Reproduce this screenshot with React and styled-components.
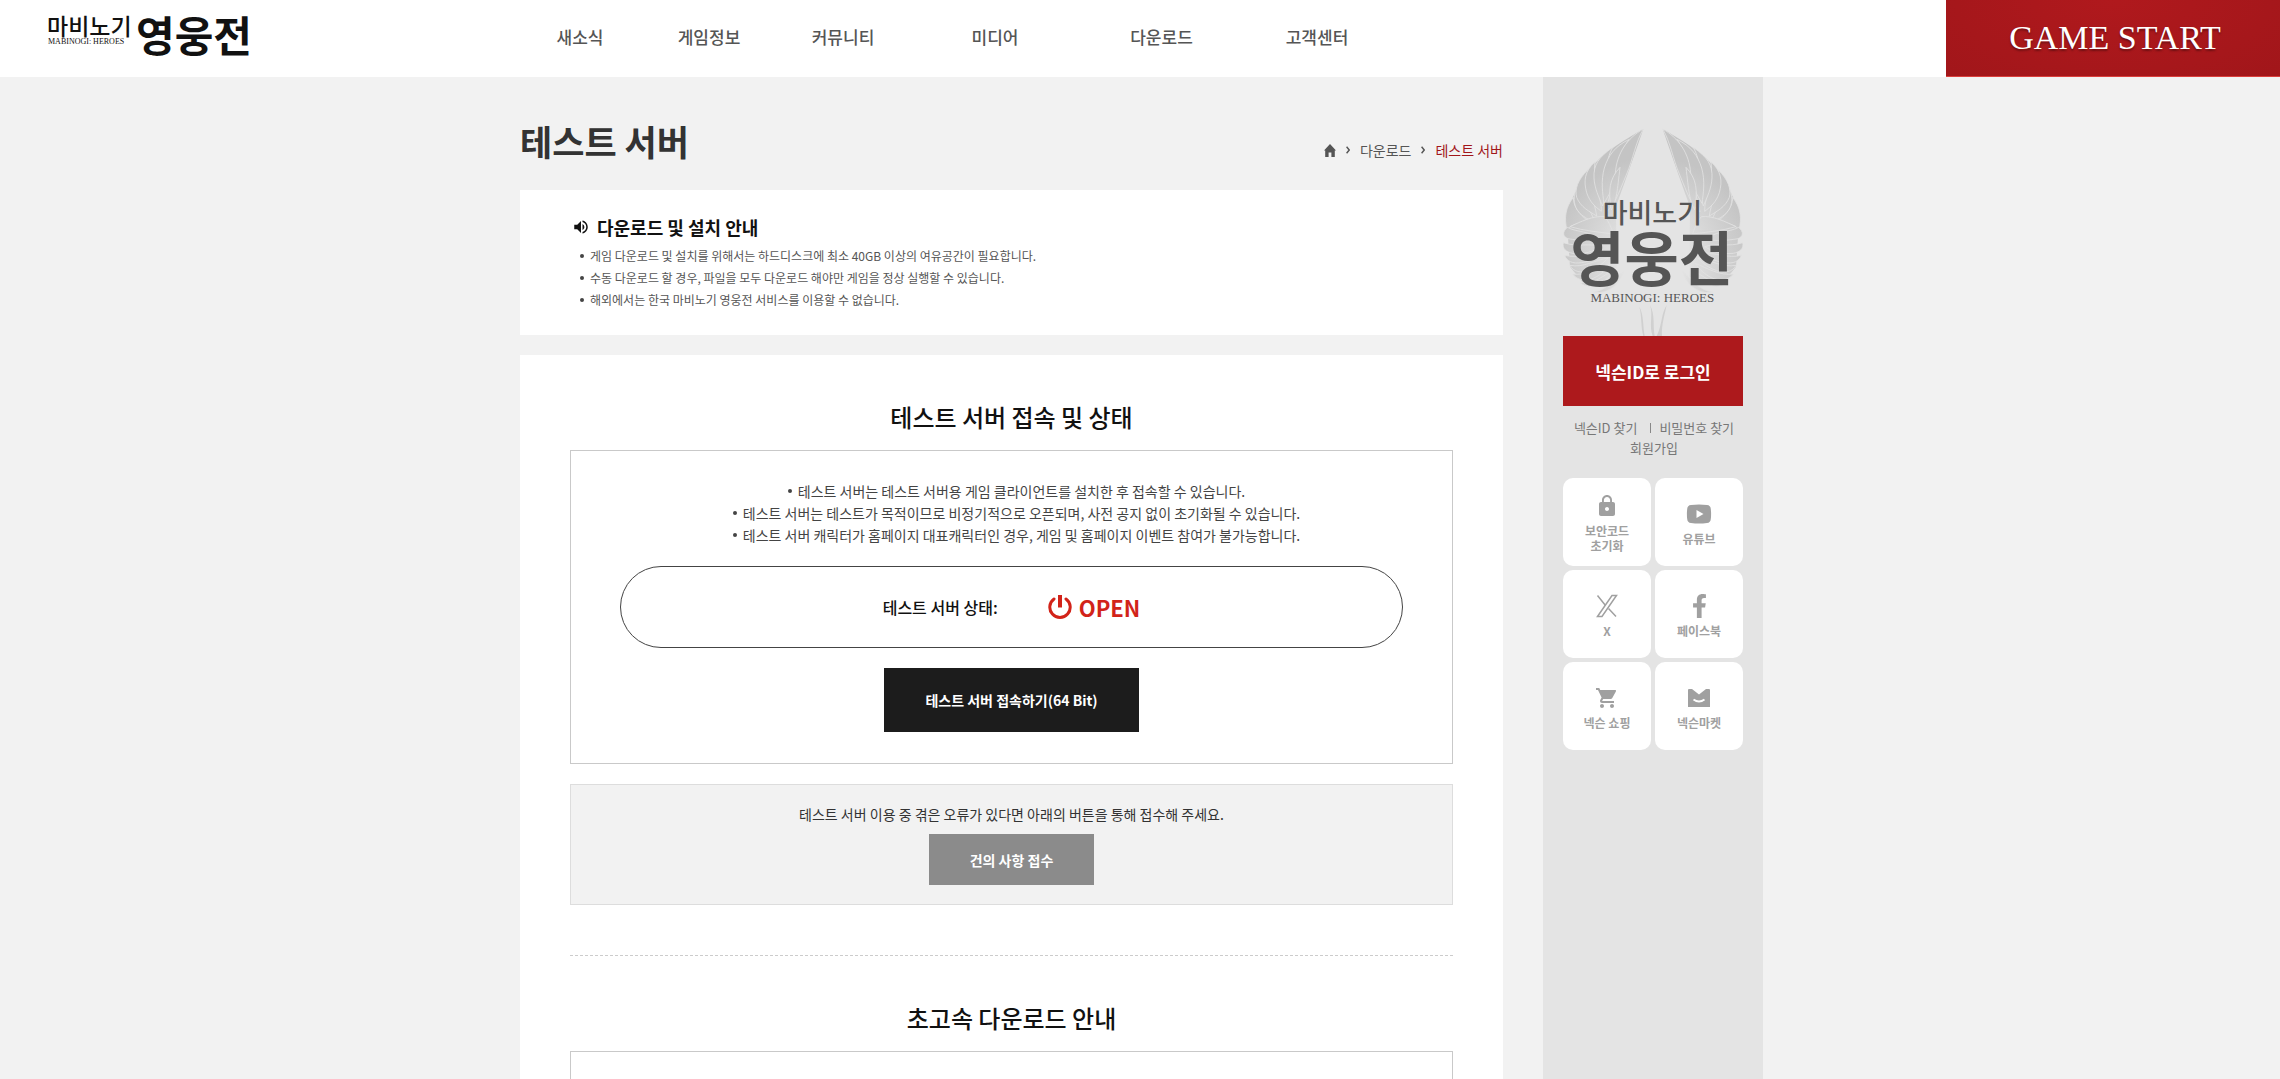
import React from "react";
import styled, { createGlobalStyle } from "styled-components";
import { MdLock, MdShoppingCart, MdVolumeUp } from "react-icons/md";
import { FaFacebookF } from "react-icons/fa";

const GlobalStyle = createGlobalStyle`
  * {
    box-sizing: border-box;
  }

  body {
    margin: 0;
    background: #f2f2f2;
    color: #333;
    font-family: "Noto Sans CJK KR", sans-serif;
    font-size: 14px;
    line-height: 22px;
  }

  h1, h2, h3, p, ul {
    margin: 0;
    padding: 0;
  }

  ul {
    list-style: none;
  }

  a {
    color: inherit;
    text-decoration: none;
  }

  button {
    border: 0;
    padding: 0;
    font-family: inherit;
    cursor: pointer;
  }

  svg {
    display: block;
  }
`;

/* header */
const Header = styled.header`
  display: grid;
  grid-template-columns: 1fr minmax(0, 1242px) 1fr;
  height: 77px;
  background: #fff;
`;

const LogoLink = styled.a`
  padding-left: 44px;
`;

const Nav = styled.nav`
  display: grid;
  grid-template-columns: 122px 136px 132px 172px 161px 150px;
  align-items: center;
  padding-bottom: 3px;
`;

const NavLink = styled.a`
  color: #555;
  font-size: 17px;
  font-weight: 500;
  line-height: 24px;
  text-align: center;
`;

const StartButton = styled.button`
  justify-self: end;
  width: 334px;
  padding-left: 4px;
  border-bottom: 1px solid #dc3f3c;
  background: radial-gradient(ellipse at 50% 0, #b0191d, #a1161a);
  color: #fff;
  font-family: "Liberation Serif", serif;
  font-size: 34px;
  text-shadow: 0 2px 2px rgba(0, 0, 0, 0.35);
`;

/* layout */
const Page = styled.div`
  display: flex;
  flex-direction: column;
  min-height: 100vh;
`;

const Body = styled.div`
  display: grid;
  grid-template-columns: minmax(0, 1fr) 220px;
  gap: 40px;
  flex: 1;
  width: 100%;
  max-width: 1246px;
  margin: 0 auto;
  padding-left: 3px;
`;

const Main = styled.main`
  display: flex;
  flex-direction: column;
  gap: 20px;
`;

const TitleRow = styled.div`
  display: flex;
  align-items: flex-end;
  justify-content: space-between;
  padding: 37px 0 3px;
`;

const PageTitle = styled.h1`
  color: #333;
  font-size: 35px;
  font-weight: 700;
  line-height: 53px;
`;

const Breadcrumb = styled.nav`
  display: flex;
  align-items: center;
  gap: 10px;
  padding-bottom: 6px;
  color: #555;
`;

const Current = styled.span`
  color: #a1161a;
`;

const Notice = styled.section`
  padding: 24px 50px;
  background: #fff;
`;

const NoticeTitle = styled.h2`
  display: flex;
  align-items: center;
  gap: 7px;
  margin-bottom: 5px;
  padding-left: 2px;
  color: #111;
  font-size: 18px;
  font-weight: 700;
  line-height: 26px;
`;

const NoticeList = styled.ul`
  padding-left: 10px;
  color: #555;
  font-size: 12px;
`;

const Item = styled.li`
  display: flex;
  align-items: center;
  justify-content: ${(props) => (props.$center ? "center" : "flex-start")};
  gap: 6px;

  &::before {
    content: "";
    width: 4px;
    height: 4px;
    border-radius: 50%;
    background: #444;
  }
`;

const Content = styled.section`
  padding: 0 50px 50px;
  background: #fff;
`;

const SectionTitle = styled.h2`
  padding: 44px 0 15px;
  color: #111;
  font-size: 24px;
  font-weight: 500;
  line-height: 36px;
  text-align: center;
`;

const Box = styled.div`
  display: flex;
  flex-direction: column;
  align-items: center;
  padding: 29px 49px 31px;
  border: 1px solid #c9c9c9;
`;

const CenterList = styled.ul`
  padding-left: 10px;
  color: #444;
  font-size: 14px;
`;

const Status = styled.div`
  display: flex;
  align-items: center;
  justify-content: center;
  gap: 50px;
  width: 100%;
  height: 82px;
  margin: 20px 0;
  border: 1px solid #444;
  border-radius: 41px;
  color: #111;
  font-size: 16px;
  font-weight: 500;
`;

const Open = styled.strong`
  display: flex;
  align-items: center;
  gap: 7px;
  color: #d22319;
  font-size: 22px;
  font-weight: 700;
`;

const ConnectButton = styled.button`
  width: 255px;
  height: 64px;
  background: #1c1c1c;
  color: #fff;
  font-size: 14px;
  font-weight: 700;
`;

const Report = styled.div`
  display: flex;
  flex-direction: column;
  align-items: center;
  gap: 9px;
  margin-top: 20px;
  padding: 18px 20px 19px;
  border: 1px solid #ddd;
  background: #f2f2f2;
`;

const ReportButton = styled.button`
  width: 165px;
  height: 51px;
  background: #8b8b8b;
  color: #fff;
  font-size: 14px;
  font-weight: 700;
`;

const Divider = styled.hr`
  margin: 50px 0 0;
  border: 0;
  border-top: 1px dashed #ccc;
`;

/* side */
const Side = styled.aside`
  padding: 51px 20px 40px;
  background: #e4e4e4;
`;

const LoginButton = styled.button`
  width: 100%;
  height: 70px;
  background: #ad191c;
  color: #fff;
  font-size: 17px;
  font-weight: 700;
`;

const Account = styled.div`
  display: flex;
  flex-wrap: wrap;
  align-items: center;
  justify-content: center;
  padding: 12px 0 20px 2px;
  color: #777;
  font-size: 13px;
  line-height: 20px;
`;

const Bar = styled.span`
  width: 1px;
  height: 10px;
  margin: 0 8px 0 13px;
  background: #888;
`;

const Tiles = styled.ul`
  display: grid;
  grid-template-columns: 1fr 1fr;
  gap: 4px;
`;

const Tile = styled.a`
  display: flex;
  flex-direction: column;
  align-items: center;
  justify-content: center;
  gap: 5px;
  height: 88px;
  padding-top: 3px;
  border-radius: 10px;
  background: #fff;
  color: #a0a0a0;
  font-size: 12px;
  font-weight: 700;
  line-height: 15px;
  text-align: center;
  white-space: pre-line;

  svg {
    height: 24px;
  }
`;

const Logo = () => (
  <svg width="210" height="77" viewBox="0 0 210 77" fill="#111" role="img">
    <text x="3" y="35" fontSize="23" fontWeight="500">
      마비노기
    </text>
    <text x="4" y="44" fontSize="8" fontFamily="Liberation Serif">
      MABINOGI: HEROES
    </text>
    <text x="92" y="52" fontSize="42" fontWeight="700">
      영웅전
    </text>
  </svg>
);

const feathers = [
  "M100 262C76 292 72 325 81 360C92 342 120 336 158 344C124 318 100 296 100 262Z",
  "M108 238C98 266 102 290 118 308C134 324 148 330 166 336C150 300 130 270 108 238Z",
  "M145 178C112 210 104 238 110 262C122 292 148 304 170 318C166 280 140 232 145 178Z",
  "M165 155C134 184 130 212 140 248C150 278 166 290 184 304C186 266 156 210 165 155Z",
  "M218 112C176 142 160 164 162 204C164 236 176 260 188 288C202 250 190 210 200 175C202 150 208 130 218 112Z",
  "M268 88C225 108 204 138 193 174C182 214 188 250 192 280C212 246 232 210 233 175C237 140 250 112 268 88Z",
  "M310 57C262 84 230 130 226 190C222 230 205 260 198 306C222 290 236 250 260 192C280 145 286 98 310 57Z",
  "M240 172C208 206 204 240 214 300C230 272 232 240 240 172Z",
  "M82 352C66 366 68 380 84 386C118 392 150 394 180 388C150 362 112 368 82 352Z",
  "M70 398C66 416 78 426 98 430C134 434 160 424 184 410C150 398 110 412 70 398Z",
  "M74 436C80 454 98 462 124 458C152 454 174 444 192 428C156 428 112 446 74 436Z",
  "M90 466C100 486 124 490 148 482C172 474 188 462 204 444C166 450 130 474 90 466Z",
  "M98 492C112 512 138 514 162 504C186 492 200 478 212 460C178 474 138 498 98 492Z",
  "M120 518C140 534 162 530 184 518C204 506 218 492 228 474C196 494 162 524 120 518Z",
  "M160 546C184 552 206 542 222 530C238 516 246 500 250 484C224 506 200 542 160 546Z",
  "M194 320C160 316 120 336 90 350C130 362 176 366 220 372C214 352 206 334 194 320Z",
];

const Wing = () => (
  <g fill="url(#wing)">
    <path d="M310 57C262 84 200 122 165 160C128 205 100 250 84 300L82 352L90 470L130 520L230 500L228 290C250 230 285 130 310 57Z" />
    <g stroke="#e2e2e2" strokeWidth="2.5">
      {feathers.map((d) => (
        <path key={d} d={d} />
      ))}
    </g>
  </g>
);

const Emblem = () => (
  <svg width="180" height="208" viewBox="69 54 540 624" role="img">
    <defs>
      <radialGradient
        id="wing"
        gradientUnits="userSpaceOnUse"
        cx="339"
        cy="440"
        r="300"
      >
        <stop offset="0.3" stopColor="#e4e4e4" />
        <stop offset="0.75" stopColor="#cfcfcf" />
        <stop offset="1" stopColor="#c4c4c4" />
      </radialGradient>
    </defs>
    <Wing />
    <g transform="translate(678 0) scale(-1 1)">
      <Wing />
    </g>
    <g fill="#d0d0d0">
      <path d="M298 590C306 620 302 650 310 678H314C308 646 312 616 298 590Z" />
      <path d="M330 585C340 615 326 645 338 678H344C338 645 346 615 330 585Z" />
      <path d="M380 585C362 615 368 640 350 678H366C364 645 374 615 380 585Z" />
    </g>
    <g fill="#555" textAnchor="middle">
      <text x="337" y="339" fontSize="81" fontWeight="500">
        마비노기
      </text>
      <text x="335" y="514" fontSize="177" fontWeight="700">
        영웅전
      </text>
      <text x="337" y="577" fontSize="39" fontFamily="Liberation Serif">
        MABINOGI: HEROES
      </text>
    </g>
  </svg>
);

const HomeIcon = () => (
  <svg width="12" height="13" viewBox="0 0 12 13" fill="#555">
    <path d="M6 0L12 6.5H10.8V13H7.4V8.5H4.6V13H1.2V6.5H0Z" />
  </svg>
);

const Chevron = () => (
  <svg width="4" height="8" viewBox="0 0 4 8" fill="none" stroke="#555">
    <path d="M0.6 0.8L3.2 4L0.6 7.2" strokeWidth="1.4" />
  </svg>
);

const PowerIcon = () => (
  <svg
    width="24"
    height="24"
    viewBox="0 0 24 24"
    fill="none"
    stroke="currentColor"
    strokeWidth="3"
  >
    <path d="M6 4A10.200 10.200 0 1 0 18 4" strokeLinecap="round" />
    <path d="M12 0V12.500" strokeWidth="4" />
  </svg>
);

const YoutubeIcon = () => (
  <svg width="26" height="24" viewBox="0 0 26 24" fill="currentColor">
    <path
      fillRule="evenodd"
      d="M5 3Q13 2 21 3Q24.500 3.300 24.800 7Q25.400 12 24.800 17Q24.500 20.700 21 21Q13 22 5 21Q1.500 20.700 1.200 17Q.6 12 1.200 7Q1.500 3.300 5 3ZM10.500 8V16L17.500 12Z"
    />
  </svg>
);

const XIcon = () => (
  <svg
    width="22"
    height="24"
    viewBox="0 0 22 24"
    fill="none"
    stroke="currentColor"
    strokeWidth="1.5"
  >
    <path d="M1.500 22.500L16 1.500H20.500L6 22.500Z" />
    <path d="M1.500 1.500L9.500 11.500M12.500 14.500L20 22.500" />
  </svg>
);

const MarketIcon = () => (
  <svg width="22" height="24" viewBox="0 0 22 24" fill="currentColor">
    <path d="M0 4Q0 3 1 3H4L11 8.500L18 3H21Q22 3 22 4V21H0Z" />
    <path
      d="M5.500 13.500Q11 17.500 16.500 13.500"
      fill="none"
      stroke="#fff"
      strokeWidth="1.800"
    />
  </svg>
);

const menus = [
  "새소식",
  "게임정보",
  "커뮤니티",
  "미디어",
  "다운로드",
  "고객센터",
];

const notices = [
  "게임 다운로드 및 설치를 위해서는 하드디스크에 최소 40GB 이상의 여유공간이 필요합니다.",
  "수동 다운로드 할 경우, 파일을 모두 다운로드 해야만 게임을 정상 실행할 수 있습니다.",
  "해외에서는 한국 마비노기 영웅전 서비스를 이용할 수 없습니다.",
];

const guides = [
  "테스트 서버는 테스트 서버용 게임 클라이언트를 설치한 후 접속할 수 있습니다.",
  "테스트 서버는 테스트가 목적이므로 비정기적으로 오픈되며, 사전 공지 없이 초기화될 수 있습니다.",
  "테스트 서버 캐릭터가 홈페이지 대표캐릭터인 경우, 게임 및 홈페이지 이벤트 참여가 불가능합니다.",
];

const quickLinks = [
  { name: "보안코드\n초기화", icon: <MdLock size={24} /> },
  { name: "유튜브", icon: <YoutubeIcon /> },
  { name: "X", icon: <XIcon /> },
  { name: "페이스북", icon: <FaFacebookF size={21} /> },
  { name: "넥슨 쇼핑", icon: <MdShoppingCart size={24} /> },
  { name: "넥슨마켓", icon: <MarketIcon /> },
];

function App() {
  return (
    <Page>
      <GlobalStyle />
      <Header>
        <LogoLink href="#" aria-label="마비노기 영웅전">
          <Logo />
        </LogoLink>
        <Nav>
          {menus.map((menu) => (
            <NavLink href="#" key={menu}>
              {menu}
            </NavLink>
          ))}
        </Nav>
        <StartButton type="button">GAME START</StartButton>
      </Header>
      <Body>
        <Main>
          <TitleRow>
            <PageTitle>테스트 서버</PageTitle>
            <Breadcrumb>
              <a href="#" aria-label="홈">
                <HomeIcon />
              </a>
              <Chevron />
              <a href="#">다운로드</a>
              <Chevron />
              <Current>테스트 서버</Current>
            </Breadcrumb>
          </TitleRow>
          <Notice>
            <NoticeTitle>
              <MdVolumeUp size={18} />
              다운로드 및 설치 안내
            </NoticeTitle>
            <NoticeList>
              {notices.map((text) => (
                <Item key={text}>{text}</Item>
              ))}
            </NoticeList>
          </Notice>
          <Content>
            <SectionTitle>테스트 서버 접속 및 상태</SectionTitle>
            <Box>
              <CenterList>
                {guides.map((text) => (
                  <Item $center key={text}>
                    {text}
                  </Item>
                ))}
              </CenterList>
              <Status>
                <span>테스트 서버 상태:</span>
                <Open>
                  <PowerIcon />
                  OPEN
                </Open>
              </Status>
              <ConnectButton type="button">
                테스트 서버 접속하기(64 Bit)
              </ConnectButton>
            </Box>
            <Report>
              <p>
                테스트 서버 이용 중 겪은 오류가 있다면 아래의 버튼을 통해 접수해
                주세요.
              </p>
              <ReportButton type="button">건의 사항 접수</ReportButton>
            </Report>
            <Divider />
            <SectionTitle>초고속 다운로드 안내</SectionTitle>
            <Box />
          </Content>
        </Main>
        <Side>
          <Emblem />
          <LoginButton type="button">넥슨ID로 로그인</LoginButton>
          <Account>
            <a href="#">넥슨ID 찾기</a>
            <Bar />
            <a href="#">비밀번호 찾기</a>
            <a href="#">회원가입</a>
          </Account>
          <Tiles>
            {quickLinks.map((link) => (
              <li key={link.name}>
                <Tile href="#">
                  {link.icon}
                  {link.name}
                </Tile>
              </li>
            ))}
          </Tiles>
        </Side>
      </Body>
    </Page>
  );
}

export default App;
